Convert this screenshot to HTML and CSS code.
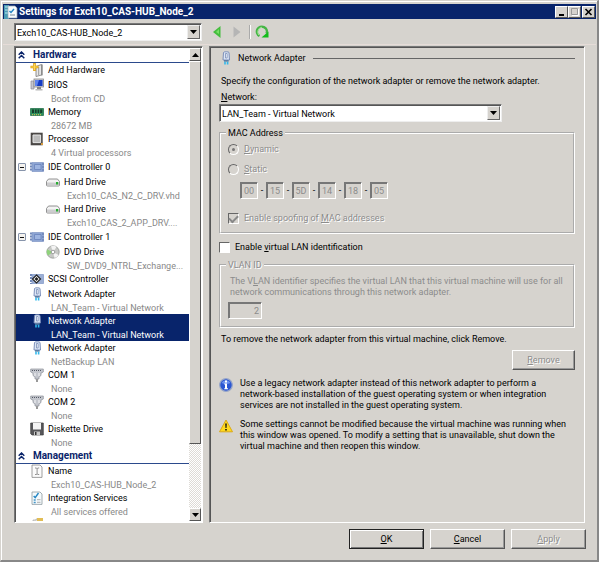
FILE: index.html
```html
<!DOCTYPE html>
<html lang="en">
<head>
<meta charset="utf-8">
<title>Settings for Exch10_CAS-HUB_Node_2</title>
<link rel="stylesheet" href="styles.css">
</head>
<body>
<svg class="defs" aria-hidden="true">
  <symbol id="i-chev" viewBox="0 0 7 8"><path d="M.7 3.7 3.5 1l2.8 2.7M.7 7.2l2.8-2.7 2.8 2.7" fill="none" stroke="#0a246a" stroke-width="1.5"/></symbol>
  <symbol id="i-add" viewBox="0 0 14 14"><path d="M6 3.5 11.5 1.5V12L6 13.5z" fill="#e8e8e8" stroke="#777" stroke-width=".8"/><path d="M11.5 1.5h1.2V12l-1.2 1.2z" fill="#888"/><path d="M8.7 4v8" stroke="#999"/><path d="M4.5 0v8M.5 4h8" stroke="#dca013" stroke-width="2.6"/><path d="M4.5.7v6.6M1.2 4h6.6" stroke="#ffd958" stroke-width="1.1"/></symbol>
  <symbol id="i-bios" viewBox="0 0 14 14"><path d="M1 3h3v8H1z" fill="#c6c6ce" stroke="#8b8b96" stroke-width=".7"/><rect x="4" y="1" width="9.5" height="8" fill="#d6d6dc" stroke="#888" stroke-width=".8"/><path d="M5 2h7.6v6H5z" fill="#173cc4"/><path d="M5 2h4L7 8H5z" fill="#5d83ee"/><path d="M7 9h4v2H7z" fill="#888"/><path d="M5.5 11h7v1.5h-7z" fill="#bbb"/></symbol>
  <symbol id="i-mem" viewBox="0 0 14 14"><path d="M.5 3.5h13v7H.5z" fill="#2c8e5d" stroke="#19683f" stroke-width=".7"/><path d="M2 4.5h2v3.5H2zM5 4.5h1.6v3.5H5zM7.6 4.5h1.6v3.5H7.6zM10.2 4.5h2v3.5h-2z" fill="#173c2b"/><path d="M2 9.7h10" stroke="#e2c350" stroke-dasharray="1 1"/></symbol>
  <symbol id="i-cpu" viewBox="0 0 14 14"><path d="M.7.7h12v12.6H.7z" fill="#4b4846"/><path d="M3 3h7.6v7.6H3z" fill="#bbb" stroke="#e6e6e6"/><path d="M11 11h2v2h-2z" fill="#d49a3f"/></symbol>
  <symbol id="i-ide" viewBox="0 0 14 14"><path d="M1 2.500v9" stroke="#7188b8" stroke-width="2" stroke-dasharray="2 1"/><path d="M2 2.500h11.500v9H2z" fill="#8da5d3" stroke="#7f96c6" stroke-width=".7"/><path d="M4.500 4.500H11v5H4.500z" fill="#9db4e0" stroke="#6a83bb" stroke-width=".8"/><path d="M13 3v8" stroke="#5a73aa" stroke-dasharray="2 1"/></symbol>
  <symbol id="i-hdd" viewBox="0 0 14 14"><path d="M2.500 4h9l2 2.500V10q0 1-1 1h-11q-1 0-1-1V6.500z" fill="#f3f3f3" stroke="#777" stroke-width=".8" stroke-linejoin="round"/><path d="M1 7.500h12v3H1z" fill="#cdcdcf"/><path d="M10 7h2.200v2.500H10z" fill="#28ad32"/></symbol>
  <symbol id="i-dvd" viewBox="0 0 14 14"><circle cx="7" cy="7" r="6.2" fill="#c6c8c5" stroke="#8d8f8c" stroke-width=".7"/><path d="M7 7 1.2 4.500A6 6 0 0 0 2 10.500z" fill="#8fd37b"/><path d="M7 7 5 1.200A6 6 0 0 1 10.500 2zM7 7l5.500 3A6 6 0 0 1 8.500 13z" fill="#f3f3f3"/><circle cx="7" cy="7" r="1.800" fill="#fff" stroke="#888" stroke-width=".8"/></symbol>
  <symbol id="i-scsi" viewBox="0 0 14 14"><path d="M1 2v10" stroke="#7188b8" stroke-width="2" stroke-dasharray="2 1"/><path d="M2 2.500h11.500v9H2z" fill="#9cafd5" stroke="#7f96c6" stroke-width=".7"/><path d="m6.500 3 4 4-4 4-4-4z" fill="#fff" stroke="#222" stroke-width="1.200"/><path d="m6.500 5 2 2-2 2-2-2z" fill="#222"/></symbol>
  <symbol id="i-net" viewBox="0 0 14 14"><path d="M4.500 1.500C4.500.500 10 .500 10 1.500l.5 7.500H4z" fill="#dce6f5" stroke="#7286b4" stroke-width=".9"/><path d="M6.500 2.500h1.600V7H6.500z" fill="#fff" stroke="#6a7fae" stroke-width=".7"/><path d="M5 9h4.600v1.700H5z" fill="#5d7da3"/><path d="M6 10.700v2.800M8.600 10.700v2.800" stroke="#30b8ec" stroke-width="1.600"/></symbol>
  <symbol id="i-com" viewBox="0 0 14 14"><path d="M.7 1h12.600v3L11 5.200v2.300L9 9v2H5V9L3 7.500V5.200L.7 4z" fill="#c3c6cd" stroke="#8d9099" stroke-width=".7"/><path d="M2 2.500h10" stroke="#555a66" stroke-dasharray="1 1"/><path d="M5 5v3M9 5v3" stroke="#f6f6f8"/><path d="M6 11h2v3H6z" fill="#999"/></symbol>
  <symbol id="i-disk" viewBox="0 0 14 14"><path d="M.7 1h12.600v12H2L.7 11.800z" fill="#57575a" stroke="#3c3c3e" stroke-width=".7"/><path d="M3 1h8v6.500H3z" fill="#f4f4f4"/><path d="M4 9.500h6V13H4z" fill="#c9c9c9"/><path d="M5 10h1.500v3H5z" fill="#333"/></symbol>
  <symbol id="i-name" viewBox="0 0 14 14"><path d="M2 1h8l2 2v10.400H2z" fill="#fbfbfb" stroke="#888" stroke-width=".8"/><path d="M5 4h1.500l.6.6.6-.6h1.500M5 10.500h1.500l.6-.6.6.6h1.500M7.100 4.500V10" fill="none" stroke="#777" stroke-width=".8"/></symbol>
  <symbol id="i-int" viewBox="0 0 14 14"><path d="M2 1h8l2 2v10.400H2z" fill="#f5fafc" stroke="#8d999f" stroke-width=".8"/><path d="m3.700 5 1.500 1.700L8.500 2" fill="none" stroke="#2486c4" stroke-width="1.400"/><path d="M3.700 9h2M3.700 11.500h2" stroke="#4796c8" stroke-width="1.300"/><path d="M7 8.700h3.500M7 11.300h3.500" stroke="#999" stroke-width=".8"/></symbol>
  <symbol id="i-snap" viewBox="0 0 14 14"><path d="M3 2h3V1h6v2h1v10H3z" fill="#ddd" stroke="#aaa" stroke-width=".7"/><path d="M7 0h6v3H7z" fill="#e1bd55"/></symbol>
  <symbol id="i-down" viewBox="0 0 7 4"><path d="M0 0h7L3.500 4z"/></symbol>
</svg>

<main class="window">
  <header class="titlebar">
    <svg class="title-icon" viewBox="0 0 14 14" aria-hidden="true"><path d="M0 0h5v14H0z" fill="#4c9db5"/><path d="M1 2h3M1 5h3M1 8h3" stroke="#bfeaf2"/><path d="M4 1h7l2 2v10H4z" fill="#f7fbfd" stroke="#9baab5" stroke-width=".7"/><path d="m5.500 6 1.500 1.500L10 4" fill="none" stroke="#2486c4" stroke-width="1.400"/><path d="M6 10h5" stroke="#789"/></svg>
    <h1>Settings for Exch10_CAS-HUB_Node_2</h1>
    <div class="caption-buttons">
      <button aria-label="Minimize"><svg viewBox="0 0 11 10"><path d="M3 7h5v2H3z"/></svg></button>
      <button aria-label="Maximize" disabled><svg viewBox="0 0 11 10"><path d="M2.500 1.500h6v6h-6z" fill="none" stroke="#999"/><path d="M9.500 2v6.500H3" fill="none" stroke="#fff"/></svg></button>
      <button class="close" aria-label="Close"><svg viewBox="0 0 11 10"><path d="m2.500 2 6 6M8.500 2l-6 6" stroke="#000" stroke-width="1.600"/></svg></button>
    </div>
  </header>

  <nav class="toolbar">
    <span class="combo machine">
      <select aria-label="Virtual machine"><option>Exch10_CAS-HUB_Node_2</option></select>
      <span class="arrow"><svg><use href="#i-down"/></svg></span>
    </span>
    <button class="tool back" aria-label="Back"><svg viewBox="0 0 8 12"><path d="M7.500 0v12L0 6z" fill="#43bd3c"/><path d="M6 3v5L3 6z" fill="#79df65"/></svg></button>
    <button class="tool forward" aria-label="Forward" disabled><svg viewBox="0 0 8 12"><path d="M.5.500v11L7.500 6z" fill="#b5b5b5"/></svg></button>
    <span class="tool-sep"></span>
    <button class="tool refresh" aria-label="Refresh"><svg viewBox="0 0 14 14"><path d="M4.500 11A5 5 0 1 1 11.500 8.500" fill="none" stroke="#45b545" stroke-width="2.400"/><path d="M3.800 10A4.800 4.800 0 0 1 7 2.200" fill="none" stroke="#9be58f" stroke-width="1"/><path d="M6.500 12.500 13.500 6.500v6z" fill="#12bd1a"/></svg></button>
  </nav>

  <div class="panes">
    <aside class="sidebar">
      <div class="tree">
        <h2><svg><use href="#i-chev"/></svg>Hardware</h2>
        <ul>
          <li><div class="row"><svg><use href="#i-add"/></svg><b>Add Hardware</b></div></li>
          <li><div class="row"><svg><use href="#i-bios"/></svg><b>BIOS</b><small>Boot from CD</small></div></li>
          <li><div class="row"><svg><use href="#i-mem"/></svg><b>Memory</b><small>28672 MB</small></div></li>
          <li><div class="row"><svg><use href="#i-cpu"/></svg><b>Processor</b><small>4 Virtual processors</small></div></li>
          <li><div class="row parent"><button class="toggle" aria-label="Collapse IDE Controller 0"></button><svg><use href="#i-ide"/></svg><b>IDE Controller 0</b></div>
            <ul>
              <li><div class="row"><svg><use href="#i-hdd"/></svg><b>Hard Drive</b><small>Exch10_CAS_N2_C_DRV.vhd</small></div></li>
              <li><div class="row"><svg><use href="#i-hdd"/></svg><b>Hard Drive</b><small>Exch10_CAS_2_APP_DRV....</small></div></li>
            </ul>
          </li>
          <li><div class="row parent"><button class="toggle" aria-label="Collapse IDE Controller 1"></button><svg><use href="#i-ide"/></svg><b>IDE Controller 1</b></div>
            <ul>
              <li><div class="row"><svg><use href="#i-dvd"/></svg><b>DVD Drive</b><small>SW_DVD9_NTRL_Exchange...</small></div></li>
            </ul>
          </li>
          <li><div class="row"><svg><use href="#i-scsi"/></svg><b>SCSI Controller</b></div></li>
          <li><div class="row"><svg><use href="#i-net"/></svg><b>Network Adapter</b><small>LAN_Team - Virtual Network</small></div></li>
          <li><div class="row selected"><svg><use href="#i-net"/></svg><b>Network Adapter</b><small>LAN_Team - Virtual Network</small></div></li>
          <li><div class="row"><svg><use href="#i-net"/></svg><b>Network Adapter</b><small>NetBackup LAN</small></div></li>
          <li><div class="row"><svg><use href="#i-com"/></svg><b>COM 1</b><small>None</small></div></li>
          <li><div class="row"><svg><use href="#i-com"/></svg><b>COM 2</b><small>None</small></div></li>
          <li><div class="row"><svg><use href="#i-disk"/></svg><b>Diskette Drive</b><small>None</small></div></li>
        </ul>
        <h2><svg><use href="#i-chev"/></svg>Management</h2>
        <ul>
          <li><div class="row"><svg><use href="#i-name"/></svg><b>Name</b><small>Exch10_CAS-HUB_Node_2</small></div></li>
          <li><div class="row"><svg><use href="#i-int"/></svg><b>Integration Services</b><small>All services offered</small></div></li>
          <li><div class="row"><svg><use href="#i-snap"/></svg></div></li>
        </ul>
      </div>
      <div class="scrollbar">
        <button class="up" aria-label="Scroll up"><svg><use href="#i-down"/></svg></button>
        <span class="thumb"></span>
        <span class="track"></span>
        <button aria-label="Scroll down"><svg><use href="#i-down"/></svg></button>
      </div>
    </aside>

    <section class="detail">
      <h3><svg><use href="#i-net"/></svg>Network Adapter</h3>
      <p class="intro">Specify the configuration of the network adapter or remove the network adapter.</p>
      <label class="net-label" for="network"><u>N</u>etwork:</label>
      <span class="combo network">
        <select id="network"><option>LAN_Team - Virtual Network</option></select>
        <span class="arrow"><svg><use href="#i-down"/></svg></span>
      </span>
      <fieldset class="mac">
        <legend>MAC Address</legend>
        <label class="choice off"><input type="radio" name="mac" checked disabled><span><u>D</u>ynamic</span></label>
        <label class="choice off"><input type="radio" name="mac" disabled><span><u>S</u>tatic</span></label>
        <div class="octets">
          <input aria-label="Octet 1" value="00" disabled><i>-</i><input aria-label="Octet 2" value="15" disabled><i>-</i><input aria-label="Octet 3" value="5D" disabled><i>-</i><input aria-label="Octet 4" value="14" disabled><i>-</i><input aria-label="Octet 5" value="18" disabled><i>-</i><input aria-label="Octet 6" value="05" disabled>
        </div>
        <label class="choice off"><input type="checkbox" checked disabled><span>Enable spoofing of <u>M</u>AC addresses</span></label>
      </fieldset>
      <label class="choice enable"><input type="checkbox"><span>Enable <u>v</u>irtual LAN identification</span></label>
      <fieldset class="vlan">
        <legend class="off">VLAN ID</legend>
        <label for="vlan">The V<u>L</u>AN identifier specifies the virtual LAN that this virtual machine will use for all<br>network communications through this network adapter.</label>
        <input id="vlan" value="2" disabled>
      </fieldset>
      <p class="hint">To remove the network adapter from this virtual machine, click Remove.</p>
      <button class="btn remove" disabled><span><u>R</u>emove</span></button>
      <div class="note">
        <svg viewBox="0 0 14 14"><circle cx="7" cy="7" r="6.300" fill="#2c56d2" stroke="#98a7c8" stroke-width="1.200"/><path d="M2.500 5a5 5 0 0 1 9 0q-4.500 2-9 0z" fill="#6c91ee"/><path d="M6 2.500h2v2H6zM5.200 5.500H8v4.700h1v1H5.200v-1H6V6.500h-.8z" fill="#fff"/></svg>
        <p>Use a legacy network adapter instead of this network adapter to perform a<br>network-based installation of the guest operating system or when integration<br>services are not installed in the guest operating system.</p>
      </div>
      <div class="note">
        <svg viewBox="0 0 14 14"><path d="M7 1 13.500 12.800H.5z" fill="#ffd91c" stroke="#dba916" stroke-linejoin="round"/><path d="M6.200 4.500h1.600L7.500 9h-1zM6.200 10h1.600v1.600H6.200z" fill="#111"/></svg>
        <p>Some settings cannot be modified because the virtual machine was running when<br>this window was opened. To modify a setting that is unavailable, shut down the<br>virtual machine and then reopen this window.</p>
      </div>
    </section>
  </div>

  <footer class="actions">
    <button class="btn default"><span><u>O</u>K</span></button>
    <button class="btn"><span><u>C</u>ancel</span></button>
    <button class="btn" disabled><span><u>A</u>pply</span></button>
  </footer>
</main>
</body>
</html>
```
FILE: styles.css
```css
* { box-sizing: border-box; }
body { margin: 0; background: #d6d3ce; color: #000; font: 9px/11px Roboto, "Liberation Sans", sans-serif; }
h1, h2, h3, p, ul, fieldset, legend { margin: 0; padding: 0; }
ul { list-style: none; }
button, input, select { font: inherit; color: inherit; margin: 0; padding: 0; border-radius: 0; }
i { font-style: normal; }
u { text-underline-offset: 1px; }
svg { display: block; flex: none; }
.defs { position: absolute; width: 0; height: 0; }

.window { display: flex; flex-direction: column; height: 100vh; min-height: 540px; padding: 3px 1px 0 2px; border: 1px solid #d6d3ce; border-right: 2px solid #888; border-bottom: 2px solid #888; box-shadow: inset 1px 1px #fff; }
.titlebar { display: flex; align-items: center; height: 15px; padding: 0 1px; background: #08246b; color: #fff; }
.title-icon { width: 14px; height: 14px; }
h1 { flex: 1; margin-left: 1px; font-size: 10px; line-height: 14px; }
.caption-buttons { display: flex; }
.caption-buttons button { width: 13px; height: 12px; border: 1px solid; border-color: #fff #555 #555 #fff; background: #d6d3ce; }
.caption-buttons .close { margin-left: 1px; }
.caption-buttons svg { width: 11px; height: 10px; }

.toolbar { display: flex; align-items: center; height: 26px; padding-left: 11px; border-bottom: 1px solid #e6dcd8; }
.combo { display: flex; height: 18px; padding: 1px; background: #fff; border: 1px solid; border-color: #777 #eee #eee #777; box-shadow: inset 1px 1px #555; }
.combo select { flex: 1; min-width: 0; appearance: none; border: 0; background: transparent; padding: 2px 0 0 1px; line-height: 12px; outline: 0; }
.combo .arrow { display: grid; place-items: center; width: 13px; background: #d6d3ce; border: 1px solid; border-color: #eee #666 #666 #eee; pointer-events: none; }
.arrow svg, .scrollbar svg { width: 7px; height: 4px; }
.machine { width: 188px; }
.tool { border: 0; background: none; }
.tool svg { width: 8px; height: 12px; }
.back { margin-left: 11px; }
.forward { margin-left: 12px; }
.tool-sep { width: 2px; height: 14px; margin: 0 4px 0 8px; border-left: 1px solid #aaa; border-right: 1px solid #fff; }
.refresh svg { width: 14px; height: 14px; }

.panes { display: flex; flex: 1; min-height: 0; gap: 6px; padding: 1px 11px 0 11px; }
.sidebar { display: flex; width: 189px; background: #fff; border: 1px solid; border-color: #777 #fff #fff #777; box-shadow: inset 1px 1px #555; padding: 1px; }
.tree { flex: 1; min-width: 0; overflow: hidden; }
h2 { display: flex; align-items: center; height: 15px; border-bottom: 1px solid #2b4a8c; color: #0a246a; font-size: 10px; line-height: 14px; }
h2 svg { width: 7px; height: 8px; margin: 0 8px 0 2px; }
.row { display: grid; grid-template-columns: 14px 1fr; grid-template-rows: 15px; column-gap: 4px; padding-left: 14px; white-space: nowrap; }
.row svg { width: 14px; height: 14px; }
.row b { font-weight: normal; line-height: 15px; }
.row small { grid-column: 2; font-size: 9px; line-height: 12px; padding-left: 3px; color: #888; }
.row.parent { grid-template-columns: 8px 14px 1fr; grid-template-rows: 16px; padding-left: 2px; align-items: center; }
li ul .row { padding-left: 30px; }
.toggle { width: 8px; height: 8px; border: 1px solid #8794ab; border-radius: 1px; background: linear-gradient(#111, #111) center / 4px 1px no-repeat, #f4f2ee; }
.row.selected { background: #08246b; color: #fff; }
.row.selected small { color: #fff; }
.scrollbar { display: flex; flex-direction: column; width: 12px; }
.scrollbar button { display: grid; place-items: center; width: 12px; height: 13px; background: #d6d3ce; border: 1px solid; border-color: #fff #555 #555 #fff; }
.scrollbar .up svg { transform: rotate(180deg); }
.thumb { flex: 384; background: #d6d3ce; border: 1px solid; border-color: #fff #555 #555 #fff; }
.track { flex: 64; background: repeating-conic-gradient(#fff 0 25%, #dedbd6 0 50%) 0 0 / 2px 2px; }

.detail { flex: 1; min-width: 0; padding: 4px 9px 0 9px; border: 1px solid; border-color: #777 #fff #fff #777; box-shadow: inset 1px 1px #555; }
h3 { display: flex; align-items: center; font-size: 9px; font-weight: normal; line-height: 14px; }
h3 svg { width: 14px; height: 14px; margin-right: 5px; }
h3::after { content: ""; flex: 1; height: 1px; margin-left: 7px; background: #666; }
.intro { padding: 11px 0 0 2px; }
.net-label { display: block; margin: 5px 0 1px 2px; }
.network { width: 283px; }
fieldset { min-width: 0; border: 2px solid; border-style: groove; border-color: #fff; }
legend { margin-left: -2px; padding: 0 2px; line-height: 12px; }
.choice { display: flex; align-items: center; gap: 5px; height: 20px; }
.off, .btn:disabled { color: #8c8c8c; text-shadow: 1px 1px #fff; }
.choice input { appearance: none; display: grid; place-items: center; width: 11px; height: 11px; border: 1px solid; border-color: #666 #fff #fff #666; background: #fff; }
.choice input:disabled { background: #d6d3ce; }
.choice input[type="radio"] { border-radius: 50%; }
.choice input[type="radio"]:checked::after { content: ""; width: 3px; height: 3px; border-radius: 50%; background: #777; }
.choice input[type="checkbox"]:checked::after { content: ""; width: 7px; height: 4px; border: solid #888; border-width: 0 0 2px 2px; transform: rotate(-45deg); }
.mac { margin-top: 5px; padding: 0 7px 4px; }
.octets { display: flex; margin: 3px 0 9px 12px; }
.octets i { width: 8px; line-height: 17px; text-align: center; }
.octets input, .vlan input { width: 18px; height: 17px; border: 1px solid; border-color: #777 #fff #fff #777; box-shadow: inset 1px 1px #777; background: #d6d3ce; color: #8c8c8c; text-align: center; }
.enable { margin-top: 3px; }
.vlan { margin-top: 2px; padding: 0 7px 7px; color: #8c8c8c; }
.vlan label { display: block; padding: 5px 0 4px 2px; }
.vlan input { display: block; width: 34px; padding-right: 2px; text-align: right; }
.hint { padding: 6px 0 5px 2px; }
.btn { width: 75px; height: 20px; background: #d6d3ce; border: 1px solid; border-color: #fff #555 #555 #fff; box-shadow: inset -1px -1px #999; }
.btn.default { border-color: #222; box-shadow: inset 1px 1px #fff, inset -1px -1px #777; }
.remove { display: block; width: 63px; margin-left: auto; }
.note { display: flex; gap: 7px; margin-top: 8px; }
.note svg { width: 14px; height: 14px; }

.actions { display: flex; justify-content: flex-end; gap: 6px; padding: 6px 10px 11px; }
```
